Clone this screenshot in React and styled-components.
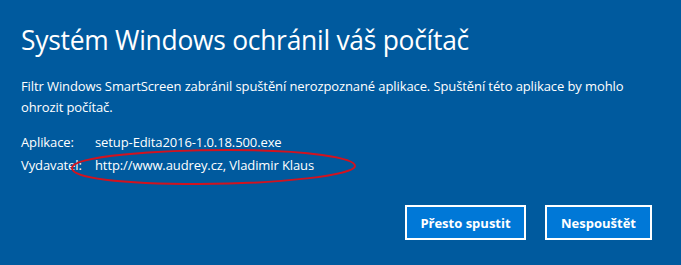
import React from 'react'
import styled, { createGlobalStyle } from 'styled-components'

const GlobalStyle = createGlobalStyle`
  html, body {
    margin: 0;
    padding: 0;
    background: #005a9e;
  }
  body {
    font-family: "Open Sans", "Noto Sans", sans-serif;
    color: #fff;
  }
`

const Dialog = styled.div`
  width: 681px;
  height: 265px;
  box-sizing: border-box;
  background: #005a9e;
  padding: 22px 29px 0 21px;
  display: flex;
  flex-direction: column;
`

const Title = styled.h1`
  margin: 0;
  font-size: 26.4px;
  font-weight: 400;
  line-height: 36px;
  letter-spacing: -0.25px;
`

const Message = styled.p`
  margin: 18px 0 0;
  font-size: 13px;
  line-height: 21px;
  letter-spacing: -0.1px;
  max-width: 640px;
`

const Details = styled.div`
  position: relative;
  margin-top: 14px;
  display: grid;
  grid-template-columns: 74px auto;
  row-gap: 2px;
  font-size: 13px;
  line-height: 21px;
  letter-spacing: -0.1px;
`

const Ring = styled.svg`
  position: absolute;
  left: 48px;
  top: 10px;
  overflow: visible;
  pointer-events: none;
`

const Actions = styled.div`
  margin-top: auto;
  margin-bottom: 25px;
  display: flex;
  justify-content: flex-end;
  gap: 19px;
`

const Button = styled.button`
  box-sizing: border-box;
  height: 35px;
  width: ${p => p.$w}px;
  background: #0078d7;
  border: 2px solid #fff;
  color: #fff;
  font-family: "Open Sans", "Noto Sans", sans-serif;
  font-size: 13px;
  font-weight: 700;
  padding: 0;
  cursor: pointer;
`

export default function App() {
  return (
    <>
      <GlobalStyle />
      <Dialog>
        <Title>Systém Windows ochránil váš počítač</Title>
        <Message>
          Filtr Windows SmartScreen zabránil spuštění nerozpoznané aplikace. Spuštění této aplikace by mohlo
          ohrozit počítač.
        </Message>
        <Details>
          <span>Aplikace:</span>
          <span>setup-Edita2016-1.0.18.500.exe</span>
          <span>Vydavatel:</span>
          <span>http://www.audrey.cz, Vladimir Klaus</span>
          <Ring width="290" height="40">
            <path
              d="M 3 26 C 3 14, 90 8, 160 8 C 240 8, 286 16, 286 24 C 286 33, 210 42, 130 42 C 50 42, 3 36, 3 26 Z"
              fill="none"
              stroke="#d2131f"
              strokeWidth="2"
            />
          </Ring>
        </Details>
        <Actions>
          <Button $w={121}>Přesto spustit</Button>
          <Button $w={107}>Nespouštět</Button>
        </Actions>
      </Dialog>
    </>
  )
}
